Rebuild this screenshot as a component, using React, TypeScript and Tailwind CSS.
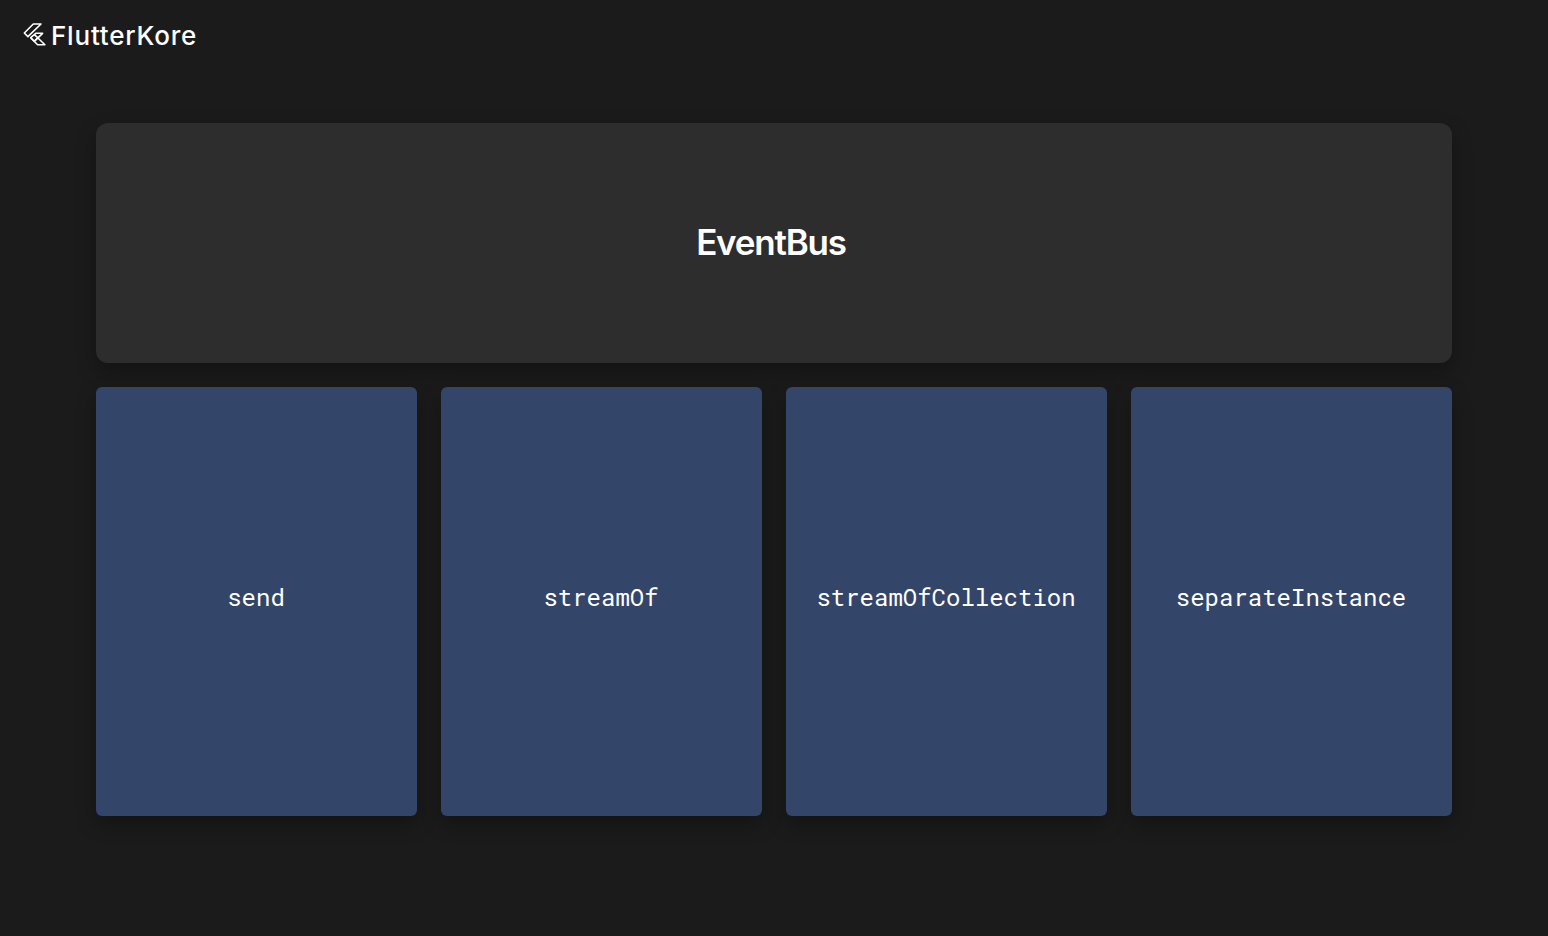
const methods = ["send", "streamOf", "streamOfCollection", "separateInstance"];

function Logo() {
  return (
    <svg width="24" height="25" viewBox="0 0 24 25" fill="none" stroke="#fff" strokeWidth="1.6" strokeLinejoin="round">
      <path d="M10.3 2H18L4.9 14.6L1.3 11Z" />
      <path d="M12.8 11.3H19.6L11.3 19.3L7.7 15.7Z" />
      <path d="M7.7 15.7L14.6 22.7H21.9L14.7 15.7" />
      <path d="M11.3 19.3L14.7 15.7L11.3 12.7" />
    </svg>
  );
}

export default function App() {
  return (
    <div className="flex h-screen flex-col overflow-hidden bg-[#1b1b1b] text-white">
      <header className="flex h-[75px] shrink-0 items-start pt-[22px] pl-[23px]">
        <Logo />
        <span className="ml-1 font-['Inter',sans-serif] text-[26px] leading-7 font-medium tracking-[0.8px]">
          FlutterKore
        </span>
      </header>
      <main className="flex flex-col gap-6 px-24 pt-12">
        <section className="flex h-60 items-center justify-center rounded-xl bg-[#2d2d2d] pr-1.5 pb-[3px] shadow-[0_8px_20px_rgba(0,0,0,0.3)]">
          <h1 className="font-['Inter',sans-serif] text-[35px] leading-10 font-semibold tracking-[-1.2px]">EventBus</h1>
        </section>
        <section className="grid grid-cols-4 gap-6">
          {methods.map((name) => (
            <div
              key={name}
              className="flex h-[429px] items-center justify-center rounded-md bg-[#334569] pr-px pb-2.5 font-['Roboto_Mono','Liberation_Mono',monospace] text-2xl shadow-[0_8px_20px_rgba(0,0,0,0.3)]"
            >
              {name}
            </div>
          ))}
        </section>
      </main>
    </div>
  );
}
